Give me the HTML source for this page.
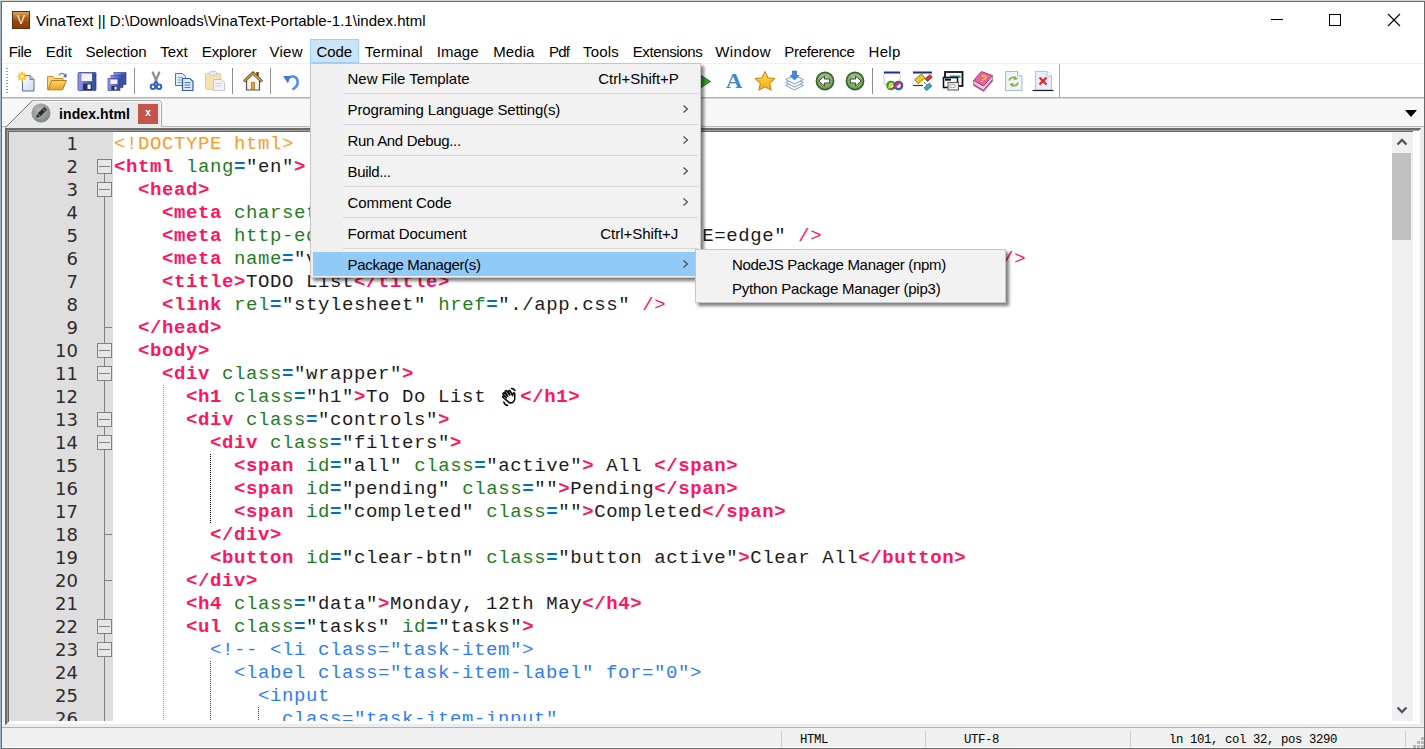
<!DOCTYPE html>
<html lang="en"><head><meta charset="utf-8"><title>VinaText</title>
<style>
*{box-sizing:border-box}
html,body{margin:0;padding:0}
body{width:1425px;height:749px;overflow:hidden;background:#fff;position:relative;font-family:"Liberation Sans",sans-serif;font-size:15px;color:#000}
.abs,#win div,#win span.mi{position:absolute}
#desk-l{left:0;top:0;width:1px;height:749px;background:#a7b3c6}
#desk-t{left:0;top:0;width:1425px;height:1px;background:#d4d7d8}
#win{position:absolute;left:1px;top:1px;width:1424px;height:748px;border:1px solid #6a6a6a;background:#fff;overflow:hidden}
/* coordinates inside #win content box are page coords minus 2 */
#inner{position:absolute;left:-2px;top:-2px;width:1425px;height:749px}
#title{left:36px;top:12px;height:18px;line-height:18px;font-size:15px;white-space:pre;letter-spacing:.04px}
#logo{left:12px;top:11px;width:18px;height:18px}
.cap{top:2px;height:36px}
#menubar{left:2px;top:39px;width:1422px;height:24px}
.mi{position:absolute;top:43px;height:18px;line-height:18px;white-space:pre}
#codehl{left:310px;top:39px;width:49px;height:24px;background:#cce4f7;border:1px solid #9bd0f9}
#menuline{left:2px;top:63px;width:1422px;height:1px;background:#f0f0f0}
#tbline{left:2px;top:97px;width:1422px;height:2px;background:linear-gradient(#b4b4b4 0 1px,#d4d4d4 1px 2px)}
#tbend{left:1059px;top:64px;width:1px;height:34px;background:#ababab}
.tsep{top:68px;width:1px;height:26px;background:#8d8d8d}
#grip{left:6px;top:68px;width:2px;height:27px;background:repeating-linear-gradient(#9a9a9a 0 1px,transparent 1px 3px)}
#tabstrip{left:2px;top:99px;width:1422px;height:27px;background:#f7f7f7}
#tabshape{left:2px;top:99px}
#tabtxt{left:59px;top:104.5px;height:18px;line-height:18px;font-weight:bold;font-size:14px;letter-spacing:.1px;white-space:pre}
#tabx{left:138px;top:104px;width:20px;height:20px;background:#c4554a;color:#fff;font-weight:bold;font-size:10px;line-height:17px;text-align:center}
#tabdd{left:1405px;top:110px;width:0;height:0;border-left:6px solid transparent;border-right:6px solid transparent;border-top:7px solid #000}
/* editor frame */
#edframe{left:5px;top:128px;width:1416px;height:597px;background:#fff;border-top:2px solid #6b6b6b;border-left:2px solid #6b6b6b;border-right:1px solid #ebebeb;border-bottom:1px solid #ebebeb}
#edframe2{left:7px;top:130px;width:1412px;height:593px;border-top:1px solid #a0a0a0;border-left:1px solid #a0a0a0}
#edframe3{left:8px;top:131px;width:1405px;height:591px;border-top:1px solid #696969;border-left:1px solid #696969}
#leftpad{left:2px;top:128px;width:3px;height:600px;background:#f3f3f3}
#rightpad{left:1421px;top:128px;width:3px;height:600px;background:#ececec}
#tabl1{left:2px;top:126px;width:1422px;height:1px;background:#b9b9b9}
#tabl2{left:2px;top:127px;width:1422px;height:1px;background:#e9e9e9}
#editor{left:9px;top:132px;width:1404px;height:589px;background:#fff;overflow:hidden}
#margin{left:0;top:0;width:104px;height:589px;background:#dedede}
.num{position:absolute;left:0;width:69px;height:23px;line-height:23px;text-align:right;font-family:"DejaVu Sans",sans-serif;font-size:18px;color:#2c2c2c}
.fline{left:95px;width:1px;background:#808080}
.fbox{left:88px;width:15px;height:15px;border:1px solid #808080;background:#e6e6e6}
.fbox i{position:absolute;left:1px;top:6px;width:11px;height:1px;background:#808080}
.ftick{left:95px;width:8px;height:1px;background:#808080}
#code{left:104px;top:0;width:1280px;height:589px}
.ln{position:absolute;left:0;height:23px;line-height:23px;white-space:pre;font-family:"Liberation Mono",monospace;font-size:19px;letter-spacing:.6px;padding-left:1px;color:#1c1c1c}
.t{color:#ff1464;font-weight:bold}
.p{color:#ff1464}
.a{color:#1e7d1e}
.e{color:#0070c0;font-weight:bold}
.s{color:#1c1c1c}
.c{color:#2f7cf6}
.d{color:#ff9a1e}
.hand{display:inline-block;vertical-align:top;width:22px;height:23px;position:relative;top:-1.5px;left:1px}
.guide{width:1px;background:repeating-linear-gradient(#9a9a9a 0 1px,transparent 1px 2px)}
.guide.k{background:repeating-linear-gradient(#000 0 1px,transparent 1px 2px)}
.guide.m{background:repeating-linear-gradient(#444 0 1px,transparent 1px 2px)}
#vsb{left:1383px;top:0;width:21px;height:589px;background:#f0f0f0}
#thumb{left:0;top:21px;width:19px;height:87px;background:#c1c1c1}
/* status bar */
#belowed{left:2px;top:725px;width:1422px;height:2px;background:#eeeeee}
#stline{left:2px;top:727px;width:1422px;height:1px;background:#b0b0b0}
#status{left:2px;top:728px;width:1422px;height:19px;background:#f0f0f0}
.ssep{top:731px;width:1px;height:17px;background:#d0d0d0}
.st{top:732px;height:16px;line-height:16px;font-family:"Liberation Mono",monospace;font-size:12.3px;letter-spacing:-.38px;white-space:pre;color:#000}
/* popup */
#popup{left:310px;top:63px;width:391px;height:215px;background:#f2f2f2;border:1px solid #c6c6c6;box-shadow:3px 3px 3px rgba(0,0,0,.5)}
#popup .gut{left:0;top:0;width:32px;height:213px;background:#f0f0f0}
#popup .pi{left:2px;width:383px;height:24px}
#popup .pi.hl{background:#91c9f7}
#popup .pt{position:absolute;left:34.6px;top:4px;height:18px;line-height:18px;white-space:pre}
#popup .sc{position:absolute;top:4px;height:18px;line-height:18px;white-space:pre}
#popup .arr{position:absolute;left:369px;top:7px}
#popup .sep{left:32px;width:355px;height:1px;background:#d7d7d7}
#sub{left:695px;top:249px;width:311px;height:54px;background:#f2f2f2;border:1px solid #c6c6c6;box-shadow:3px 3px 3px rgba(0,0,0,.5)}
#sub span{position:absolute;left:36px;height:18px;line-height:18px;white-space:pre}
.ico{position:absolute}
</style></head><body>
<div class="abs" id="desk-l"></div><div class="abs" id="desk-t"></div>
<div id="win"><div id="inner">
<svg class="ico" id="logo" viewBox="0 0 18 18"><defs><linearGradient id="lg" x1="0" y1="0" x2="0" y2="1"><stop offset="0" stop-color="#d8ad5e"/><stop offset=".35" stop-color="#b06a2a"/><stop offset=".6" stop-color="#93450c"/><stop offset="1" stop-color="#8e3f08"/></linearGradient></defs><rect x=".5" y=".5" width="17" height="17" fill="url(#lg)" stroke="#5e2c08"/><text x="9" y="13" font-family="Liberation Sans, sans-serif" font-size="12" fill="#fff3d0" text-anchor="middle">V</text></svg>
<div id="title">VinaText || D:\Downloads\VinaText-Portable-1.1\index.html</div>
<svg class="ico" style="left:1265px;top:8px" width="145" height="24" viewBox="0 0 145 24"><path d="M6 11.5h12" stroke="#000" stroke-width="1"/><rect x="64.5" y="6.5" width="11" height="11" fill="none" stroke="#000"/><path d="M123 6l12 12M135 6l-12 12" stroke="#000" stroke-width="1.1"/></svg>
<div id="codehl"></div>
<span class="mi" style="left:8.7px;letter-spacing:-0.32px">File</span>
<span class="mi" style="left:45.7px;letter-spacing:0.13px">Edit</span>
<span class="mi" style="left:85.5px;letter-spacing:-0.07px">Selection</span>
<span class="mi" style="left:160.2px;letter-spacing:-0.00px">Text</span>
<span class="mi" style="left:201.8px;letter-spacing:-0.12px">Explorer</span>
<span class="mi" style="left:269.6px;letter-spacing:0.21px">View</span>
<span class="mi" style="left:316.5px;letter-spacing:-0.11px">Code</span>
<span class="mi" style="left:364.8px;letter-spacing:0.14px">Terminal</span>
<span class="mi" style="left:436.7px;letter-spacing:0.06px">Image</span>
<span class="mi" style="left:493.3px;letter-spacing:0.05px">Media</span>
<span class="mi" style="left:549.0px;letter-spacing:-0.77px">Pdf</span>
<span class="mi" style="left:583.0px;letter-spacing:0.17px">Tools</span>
<span class="mi" style="left:632.7px;letter-spacing:-0.37px">Extensions</span>
<span class="mi" style="left:715.3px;letter-spacing:0.37px">Window</span>
<span class="mi" style="left:784.3px;letter-spacing:-0.31px">Preference</span>
<span class="mi" style="left:868.5px;letter-spacing:0.34px">Help</span>
<div id="menuline"></div>
<div id="grip"></div>
<svg width="0" height="0" style="position:absolute"><defs>
<linearGradient id="gPage" x1="0" y1="0" x2="1" y2="1"><stop offset="0" stop-color="#ffffff"/><stop offset="1" stop-color="#cfd8ee"/></linearGradient>
<linearGradient id="gFold" x1="0" y1="0" x2="0" y2="1"><stop offset="0" stop-color="#fbd674"/><stop offset="1" stop-color="#e9a21f"/></linearGradient>
<linearGradient id="gFlop" x1="0" y1="0" x2="1" y2="0"><stop offset="0" stop-color="#9a94ea"/><stop offset=".5" stop-color="#5f6fd0"/><stop offset="1" stop-color="#2f4896"/></linearGradient>
<radialGradient id="gGreen" cx=".5" cy=".4" r=".6"><stop offset="0" stop-color="#b9dd9a"/><stop offset="1" stop-color="#5f9a45"/></radialGradient>
<linearGradient id="gStar" x1="0" y1="0" x2="0" y2="1"><stop offset="0" stop-color="#ffe04a"/><stop offset="1" stop-color="#f5a81c"/></linearGradient>
</defs></svg>
<!-- 1 new -->
<svg class="ico" style="left:16px;top:71px" width="20" height="21" viewBox="0 0 20 21"><path d="M6.5 4.5H14l4 4v11.500H6.500z" fill="url(#gPage)" stroke="#5b6c9c"/><path d="M14 4.500v4h4" fill="#b9c4e2" stroke="#5b6c9c" stroke-width=".8"/><g stroke="#f7c63a" stroke-width="2" stroke-linecap="round"><path d="M6 1.500v8M2 5.500h8M3.200 2.700l5.600 5.600M8.800 2.700l-5.600 5.600"/></g><circle cx="6" cy="5.500" r="1.600" fill="#fff4b8"/></svg>
<!-- 2 open -->
<svg class="ico" style="left:46px;top:71px" width="22" height="21" viewBox="0 0 22 21"><path d="M1.500 18.500V5.500h5.500l1.500 2H17v3" fill="#f8d27a" stroke="#c98e2a"/><path d="M1.800 18.800L6 9.500h14.500L16.500 18.800z" fill="url(#gFold)" stroke="#b97a18"/><path d="M12.500 4.500c1.500-3 5.500-3 7 0.500" fill="none" stroke="#6f84a8" stroke-width="1.200"/><path d="M20.600 2.200v4h-3.600z" fill="#4f6690"/></svg>
<!-- 3 save -->
<svg class="ico" style="left:77px;top:71px" width="20" height="21" viewBox="0 0 20 21"><rect x="1" y="1.500" width="18" height="18" rx="1" fill="url(#gFlop)" stroke="#3d4a9a" stroke-width=".8"/><rect x="4.500" y="2.500" width="10.500" height="7.500" fill="#f2f3fa"/><rect x="6" y="12.500" width="9" height="6.500" fill="#2a2f55"/><rect x="10.500" y="13.500" width="3.200" height="4.500" fill="#eef0fb"/></svg>
<!-- 4 save all -->
<svg class="ico" style="left:107px;top:71px" width="20" height="21" viewBox="0 0 20 21"><rect x="7" y="1.500" width="12" height="12" fill="url(#gFlop)" stroke="#3d4a9a" stroke-width=".7"/><rect x="4" y="4.500" width="12" height="12" fill="url(#gFlop)" stroke="#3d4a9a" stroke-width=".7"/><rect x="1" y="7.500" width="12" height="12" fill="url(#gFlop)" stroke="#3d4a9a" stroke-width=".7"/><rect x="3.500" y="8.500" width="7" height="4.500" fill="#f2f3fa"/><rect x="4.500" y="15" width="6" height="4" fill="#2a2f55"/><rect x="7.500" y="15.700" width="2.200" height="2.800" fill="#eef0fb"/></svg>
<div class="tsep" style="left:134px"></div>
<!-- 5 cut -->
<svg class="ico" style="left:146px;top:71px" width="20" height="21" viewBox="0 0 20 21"><path d="M6.800 1.500L11 11.500M13.200 1.500L9 11.500" stroke="#8d929c" stroke-width="2.300" stroke-linecap="round"/><circle cx="7" cy="15.800" r="2.300" fill="none" stroke="#2f62c8" stroke-width="2"/><circle cx="13" cy="15.800" r="2.300" fill="none" stroke="#2f62c8" stroke-width="2"/><path d="M8 13l2-2 2 2" fill="none" stroke="#2f62c8" stroke-width="1.800"/></svg>
<!-- 6 copy -->
<svg class="ico" style="left:174px;top:71px" width="21" height="21" viewBox="0 0 21 21"><path d="M1.500 2.500h7l3 3v9h-10z" fill="#e9effb" stroke="#4a72c4"/><path d="M3.500 6.500h5M3.500 9h5M3.500 11.500h5" stroke="#7fa0de" stroke-width="1"/><path d="M8.500 7.500h7.500l3 3v9h-10.500z" fill="#e1e9fa" stroke="#2f5cb6" stroke-width="1.200"/><path d="M10.500 11.500h6M10.500 14h6M10.500 16.500h6" stroke="#4a78d0" stroke-width="1.200"/></svg>
<!-- 7 paste (disabled look) -->
<svg class="ico" style="left:204px;top:70px" width="22" height="22" viewBox="0 0 22 22" opacity=".8"><rect x="1.500" y="3.500" width="15" height="16" rx="1" fill="#f3dca0" stroke="#d9bf86"/><rect x="5.500" y="1.500" width="7" height="4" rx="1" fill="#dfe3e8" stroke="#b9bec6"/><path d="M9.500 9.500h8l3 3v8h-11z" fill="#eef0f4" stroke="#b4bac6"/><path d="M11.500 13.500h6M11.500 16h6" stroke="#c3c8d2"/></svg>
<div class="tsep" style="left:232px"></div>
<!-- 8 home -->
<svg class="ico" style="left:243px;top:70px" width="20" height="22" viewBox="0 0 20 22"><rect x="13.300" y="2" width="2.400" height="5" fill="#7a3b1c"/><path d="M3.500 10.500v9.500h13v-9.500" fill="#f4f4f0" stroke="#55504a" stroke-width="1.200"/><path d="M1 11.500L10 3l9 8.500" fill="none" stroke="#4a3a2a" stroke-width="3" stroke-linejoin="miter"/><path d="M1.300 11.200L10 3.200l8.700 8" fill="none" stroke="#e9a43a" stroke-width="1.500"/><rect x="8.300" y="12.500" width="3.400" height="7" fill="#e9a020" stroke="#9a6a1a" stroke-width=".6"/></svg>
<div class="tsep" style="left:270px"></div>
<!-- 9 undo -->
<svg class="ico" style="left:281px;top:71px" width="20" height="21" viewBox="0 0 20 21"><path d="M6.500 8c3-3.800 9-3.200 10 1.500c.8 4-1.200 6.800-4.200 8.300" fill="none" stroke="#4f8cf0" stroke-width="2.600" stroke-linecap="round"/><path d="M2 5l7.200 0-2.200 7.500z" fill="#3a76e4"/></svg>
<!-- play (partially hidden) -->
<svg class="ico" style="left:694px;top:71px" width="20" height="21" viewBox="0 0 20 21"><path d="M4 2.500l12.500 8-12.500 8z" fill="#3e9a3a" stroke="#2a6f28"/></svg>
<!-- A -->
<div class="ico" style="left:723px;top:69px;width:22px;height:24px;line-height:24px;text-align:center;font-family:'Liberation Serif',serif;font-weight:bold;font-size:20px;color:#3a86d8;transform:scaleX(1.15)">A</div>
<!-- star -->
<svg class="ico" style="left:754px;top:70px" width="22" height="22" viewBox="0 0 22 22"><path d="M11 1.500l2.900 6.300 6.800.8-5 4.700 1.400 6.800L11 16.700l-6.100 3.400 1.400-6.800-5-4.700 6.800-.8z" fill="url(#gStar)" stroke="#c98a1a" stroke-width="1.100" stroke-linejoin="round"/></svg>
<!-- stack -->
<svg class="ico" style="left:784px;top:70px" width="21" height="22" viewBox="0 0 21 22"><g stroke="#7d98c8" stroke-width=".9" fill="#f2f6fd"><path d="M1.500 15.500l9-4 9 4-9 4.500z"/><path d="M1.500 12.500l9-4 9 4-9 4.500z"/><path d="M1.500 9.500l9-4 9 4-9 4.500z"/></g><path d="M8.500 1h4v4.500h2.500L10.500 10 6 5.500h2.500z" fill="#3f86ea" stroke="#2a62c0" stroke-width=".6"/></svg>
<!-- back -->
<svg class="ico" style="left:815px;top:71px" width="20" height="20" viewBox="0 0 20 20"><circle cx="10" cy="10" r="8.600" fill="url(#gGreen)" stroke="#3f5f33" stroke-width="1.600"/><path d="M3.800 10l5.600-5v3h5.300v4H9.400v3z" fill="#fff" stroke="#3d3d3d" stroke-width="1"/></svg>
<!-- fwd -->
<svg class="ico" style="left:845px;top:71px" width="20" height="20" viewBox="0 0 20 20"><circle cx="10" cy="10" r="8.600" fill="url(#gGreen)" stroke="#3f5f33" stroke-width="1.600"/><path d="M16.200 10l-5.600-5v3H5.300v4h5.300v3z" fill="#fff" stroke="#3d3d3d" stroke-width="1"/></svg>
<div class="tsep" style="left:872px"></div>
<!-- win infinity -->
<svg class="ico" style="left:883px;top:70px" width="21" height="22" viewBox="0 0 21 22"><rect x="1" y="2.500" width="16" height="12" fill="#fdfdfd" stroke="#c9ccd4"/><rect x="1" y="1.500" width="16" height="2" fill="#1a2a9a"/><circle cx="8" cy="15.500" r="3.600" fill="none" stroke="#2f9a3a" stroke-width="2.400"/><circle cx="15.500" cy="15.500" r="3.600" fill="none" stroke="#2f55c8" stroke-width="2.400"/><path d="M5.500 18l4.500-5" stroke="#f0c020" stroke-width="2.200"/><path d="M10 18.500l7-7" stroke="#e03028" stroke-width="2.400"/></svg>
<!-- win tags -->
<svg class="ico" style="left:912px;top:70px" width="21" height="22" viewBox="0 0 21 22"><rect x="1" y="1.500" width="19" height="2" fill="#1a2a9a"/><path d="M1 15.500h10" stroke="#3a3a3a" stroke-width="1.200"/><g transform="rotate(-40 8 9)"><rect x="3.500" y="6" width="9" height="5.500" fill="#e9c81c" stroke="#7a6a10" stroke-width=".7"/></g><g transform="rotate(-40 17 8)"><rect x="13.500" y="6" width="6.500" height="3.600" fill="#d03a3a" stroke="#6a2020" stroke-width=".6"/></g><g transform="rotate(-40 16 17)"><rect x="12.500" y="15" width="7" height="3.800" fill="#3aa6c8" stroke="#1f5a70" stroke-width=".6"/></g><path d="M12 12l3 3" stroke="#555" stroke-width=".8"/></svg>
<!-- windows -->
<svg class="ico" style="left:942px;top:70px" width="22" height="22" viewBox="0 0 22 22"><rect x="3" y="2" width="17.500" height="14" fill="#fff" stroke="#111" stroke-width="1.800"/><rect x="8" y="5.500" width="10.500" height="2.400" fill="#2a9aa0"/><rect x="1.500" y="7.500" width="14" height="10" fill="#fff" stroke="#111" stroke-width="1.600"/><rect x="3" y="8.700" width="6" height="2" fill="#111"/><rect x="6" y="12.500" width="10.500" height="7.500" fill="#eef0f2" stroke="#555" stroke-width="1"/><rect x="8" y="14.500" width="5" height="3" fill="none" stroke="#9aa" stroke-width=".8"/></svg>
<!-- book -->
<svg class="ico" style="left:972px;top:69px" width="22" height="23" viewBox="0 0 22 23"><path d="M1.500 11.500V15.500L11.500 21.500L20.500 11V6.500L11.500 17z" fill="#f4eef3" stroke="#9a6a88" stroke-width=".8"/><path d="M1.500 13.500L11.500 19.300L20.500 8.800" fill="none" stroke="#c9b4c2" stroke-width=".8"/><path d="M1.500 11.500L9.500 2.500L20.500 6.500L11.500 17z" fill="#e9609f" stroke="#b23a78" stroke-width="1"/><path d="M1.500 15.800L11.500 21.800L20.500 11.300" fill="none" stroke="#c43f86" stroke-width="1.600"/><text x="11" y="13.500" font-family="Liberation Sans, sans-serif" font-weight="bold" font-size="11" fill="#f6d820" text-anchor="middle" transform="rotate(20 11 10)">?</text></svg>
<!-- refresh page -->
<svg class="ico" style="left:1004px;top:70px" width="20" height="22" viewBox="0 0 20 22"><path d="M1.500 1.500h12l4.500 4.500v14.500h-16.500z" fill="#eef2fb" stroke="#aab8d8"/><path d="M13.500 1.500v4.500h4.500" fill="#fff" stroke="#aab8d8"/><path d="M5.200 10.500c.5-3 4.500-4.200 6.800-2" fill="none" stroke="#8ab02a" stroke-width="1.700"/><path d="M10.500 6l3.500 3-4.200 1.300z" fill="#8ab02a"/><path d="M14 12.500c-.5 3-4.500 4.200-6.800 2" fill="none" stroke="#8ab02a" stroke-width="1.700"/><path d="M8.700 17l-3.500-3 4.200-1.300z" fill="#8ab02a"/></svg>
<!-- delete page -->
<svg class="ico" style="left:1032px;top:70px" width="22" height="22" viewBox="0 0 22 22"><path d="M3.500 1.500h11.500l4.500 4.500v14h-16z" fill="#e8eefb" stroke="#b4c2e2"/><path d="M15 1.500v4.500h4.500" fill="#fff" stroke="#b4c2e2"/><path d="M0.500 20.500h21" stroke="#222" stroke-width="1.200"/><path d="M7.500 7.500l7 7M14.500 7.500l-7 7" stroke="#e8202a" stroke-width="2.200"/></svg>

<div id="tbend"></div>
<div id="tbline"></div>
<div id="tabstrip"></div><div id="tabl1"></div><div id="tabl2"></div>
<svg class="ico" id="tabshape" width="170" height="29" viewBox="0 0 170 29"><path d="M2.500 29 L30.500 1.500 H157.500 L159.500 3.500 V29 Z" fill="#e9e9e9"/><path d="M31 2.500H157.500L158.500 3.500V27" fill="none" stroke="#f8f8f8"/><path d="M30.500 1.500 H157.500 L159.500 3.500 V27.500" fill="none" stroke="#a9a9a9"/><path d="M3.500 28.500 L30.500 1.500" fill="none" stroke="#6f6f6f" stroke-width="1"/><defs><radialGradient id="pg" cx=".4" cy=".35" r=".7"><stop offset="0" stop-color="#b5b9b7"/><stop offset="1" stop-color="#7f8482"/></radialGradient></defs><circle cx="39" cy="14" r="9.500" fill="url(#pg)"/><g transform="translate(39 14) rotate(45)"><rect x="-2" y="-6.500" width="4" height="9" fill="#2e2e2e"/><path d="M-2 3.200h4L0 6.800z" fill="#2e2e2e"/><rect x="-2" y="-4.600" width="4" height=".9" fill="#8a8e8c"/></g></svg>
<div id="tabtxt">index.html</div>
<div id="tabx">x</div>
<div id="tabdd"></div>
<div id="leftpad"></div><div id="rightpad"></div><div id="edframe"></div><div id="edframe2"></div><div id="edframe3"></div>
<div id="editor">
<div id="margin">
<div class="num" style="top:0px">1</div>
<div class="num" style="top:23px">2</div>
<div class="num" style="top:46px">3</div>
<div class="num" style="top:69px">4</div>
<div class="num" style="top:92px">5</div>
<div class="num" style="top:115px">6</div>
<div class="num" style="top:138px">7</div>
<div class="num" style="top:161px">8</div>
<div class="num" style="top:184px">9</div>
<div class="num" style="top:207px">10</div>
<div class="num" style="top:230px">11</div>
<div class="num" style="top:253px">12</div>
<div class="num" style="top:276px">13</div>
<div class="num" style="top:299px">14</div>
<div class="num" style="top:322px">15</div>
<div class="num" style="top:345px">16</div>
<div class="num" style="top:368px">17</div>
<div class="num" style="top:391px">18</div>
<div class="num" style="top:414px">19</div>
<div class="num" style="top:437px">20</div>
<div class="num" style="top:460px">21</div>
<div class="num" style="top:483px">22</div>
<div class="num" style="top:506px">23</div>
<div class="num" style="top:529px">24</div>
<div class="num" style="top:552px">25</div>
<div class="num" style="top:575px">26</div>
<div class="fline" style="top:42px;height:600px"></div>
<div class="fbox" style="top:27px"><i></i></div>
<div class="fbox" style="top:50px"><i></i></div>
<div class="fbox" style="top:211px"><i></i></div>
<div class="fbox" style="top:234px"><i></i></div>
<div class="fbox" style="top:280px"><i></i></div>
<div class="fbox" style="top:303px"><i></i></div>
<div class="fbox" style="top:487px"><i></i></div>
<div class="fbox" style="top:510px"><i></i></div>
<div class="ftick" style="top:195px"></div>
<div class="ftick" style="top:402px"></div>
<div class="ftick" style="top:448px"></div>
</div>
<div id="code">
<div class="guide" style="left:50px;top:253px;height:340px"></div>
<div class="guide k" style="left:97px;top:322px;height:69px"></div>
<div class="guide m" style="left:97px;top:529px;height:70px"></div>
<div class="guide m" style="left:145px;top:575px;height:20px"></div>
<div class="ln" style="top:1px"><span class="d">&lt;!DOCTYPE html&gt;</span></div>
<div class="ln" style="top:24px"><span class="t">&lt;html</span> <span class="a">lang</span><span class="e">=</span><span class="s">"en"</span><span class="t">&gt;</span></div>
<div class="ln" style="top:47px">  <span class="t">&lt;head&gt;</span></div>
<div class="ln" style="top:70px">    <span class="t">&lt;meta</span> <span class="a">charset</span><span class="e">=</span><span class="s">"UTF-8"</span> <span class="p">/&gt;</span></div>
<div class="ln" style="top:93px">    <span class="t">&lt;meta</span> <span class="a">http-equiv</span><span class="e">=</span><span class="s">"X-UA-Compatible"</span> <span class="a">content</span><span class="e">=</span><span class="s">"IE=edge"</span> <span class="p">/&gt;</span></div>
<div class="ln" style="top:116px">    <span class="t">&lt;meta</span> <span class="a">name</span><span class="e">=</span><span class="s">"viewport"</span> <span class="a">content</span><span class="e">=</span><span class="s">"width=device-width, initial-scale=1.0"</span> <span class="p">/&gt;</span></div>
<div class="ln" style="top:139px">    <span class="t">&lt;title&gt;</span>TODO List<span class="t">&lt;/title&gt;</span></div>
<div class="ln" style="top:162px">    <span class="t">&lt;link</span> <span class="a">rel</span><span class="e">=</span><span class="s">"stylesheet"</span> <span class="a">href</span><span class="e">=</span><span class="s">"./app.css"</span> <span class="p">/&gt;</span></div>
<div class="ln" style="top:185px">  <span class="t">&lt;/head&gt;</span></div>
<div class="ln" style="top:208px">  <span class="t">&lt;body&gt;</span></div>
<div class="ln" style="top:231px">    <span class="t">&lt;div</span> <span class="a">class</span><span class="e">=</span><span class="s">"wrapper"</span><span class="t">&gt;</span></div>
<div class="ln" style="top:254px">      <span class="t">&lt;h1</span> <span class="a">class</span><span class="e">=</span><span class="s">"h1"</span><span class="t">&gt;</span>To Do List <svg class="hand" width="22" height="23" viewBox="0 0 22 23"><title>&#x1F44B;</title><g transform="rotate(-28 11 12)" fill="none" stroke="#000" stroke-width="1.5" stroke-linecap="round" stroke-linejoin="round"><path d="M6.5 13.5 L4.6 9.2 C4.2 8 5.8 7.4 6.4 8.5 L7.6 11 L6.3 6.6 C6 5.4 7.6 4.9 8.1 6.1 L9.5 10.2 L9.1 5.4 C9.1 4.2 10.8 4.1 11 5.3 L11.7 10.2 L12.3 6.6 C12.5 5.5 14 5.7 14 6.8 L13.8 12 L15.3 10.4 C16.2 9.6 17.3 10.6 16.6 11.5 L14.4 15.6 C13.2 18.3 9.4 18.9 7.6 16.4 Z"/><path d="M3.2 13.5 C2.6 15.4 3.4 17.3 4.8 18.3 M16.2 5.2 C17.6 5.9 18.4 7.2 18.4 8.6"/></g></svg><span class="t">&lt;/h1&gt;</span></div>
<div class="ln" style="top:277px">      <span class="t">&lt;div</span> <span class="a">class</span><span class="e">=</span><span class="s">"controls"</span><span class="t">&gt;</span></div>
<div class="ln" style="top:300px">        <span class="t">&lt;div</span> <span class="a">class</span><span class="e">=</span><span class="s">"filters"</span><span class="t">&gt;</span></div>
<div class="ln" style="top:323px">          <span class="t">&lt;span</span> <span class="a">id</span><span class="e">=</span><span class="s">"all"</span> <span class="a">class</span><span class="e">=</span><span class="s">"active"</span><span class="t">&gt;</span> All <span class="t">&lt;/span&gt;</span></div>
<div class="ln" style="top:346px">          <span class="t">&lt;span</span> <span class="a">id</span><span class="e">=</span><span class="s">"pending"</span> <span class="a">class</span><span class="e">=</span><span class="s">""</span><span class="t">&gt;</span>Pending<span class="t">&lt;/span&gt;</span></div>
<div class="ln" style="top:369px">          <span class="t">&lt;span</span> <span class="a">id</span><span class="e">=</span><span class="s">"completed"</span> <span class="a">class</span><span class="e">=</span><span class="s">""</span><span class="t">&gt;</span>Completed<span class="t">&lt;/span&gt;</span></div>
<div class="ln" style="top:392px">        <span class="t">&lt;/div&gt;</span></div>
<div class="ln" style="top:415px">        <span class="t">&lt;button</span> <span class="a">id</span><span class="e">=</span><span class="s">"clear-btn"</span> <span class="a">class</span><span class="e">=</span><span class="s">"button active"</span><span class="t">&gt;</span>Clear All<span class="t">&lt;/button&gt;</span></div>
<div class="ln" style="top:438px">      <span class="t">&lt;/div&gt;</span></div>
<div class="ln" style="top:461px">      <span class="t">&lt;h4</span> <span class="a">class</span><span class="e">=</span><span class="s">"data"</span><span class="t">&gt;</span>Monday, 12th May<span class="t">&lt;/h4&gt;</span></div>
<div class="ln" style="top:484px">      <span class="t">&lt;ul</span> <span class="a">class</span><span class="e">=</span><span class="s">"tasks"</span> <span class="a">id</span><span class="e">=</span><span class="s">"tasks"</span><span class="t">&gt;</span></div>
<div class="ln" style="top:507px">        <span class="c">&lt;!-- &lt;li class="task-item"&gt;</span></div>
<div class="ln" style="top:530px">          <span class="c">&lt;label class="task-item-label" for="0"&gt;</span></div>
<div class="ln" style="top:553px">            <span class="c">&lt;input</span></div>
<div class="ln" style="top:576px">              <span class="c">class="task-item-input"</span></div>
</div>
<div id="vsb"><div id="thumb"></div>
<svg class="ico" style="left:4px;top:6px" width="12" height="8" viewBox="0 0 12 8"><path d="M1.500 6.500L6 2L10.500 6.500" fill="none" stroke="#505560" stroke-width="2.4"/></svg>
<svg class="ico" style="left:4px;top:574px" width="12" height="8" viewBox="0 0 12 8"><path d="M1.500 1.500L6 6L10.500 1.500" fill="none" stroke="#505560" stroke-width="2.4"/></svg>
</div>
</div>
<div id="belowed"></div><div id="stline"></div><div id="status"></div>
<div class="ssep" style="left:781px"></div><div class="ssep" style="left:925px"></div><div class="ssep" style="left:1130px"></div><div class="ssep" style="left:1405px"></div>
<div class="st" style="left:800px">HTML</div><div class="st" style="left:964px">UTF-8</div><div class="st" style="left:1169px">ln 101, col 32, pos 3290</div>
<svg class="ico" style="left:1412px;top:736px" width="13" height="13" viewBox="0 0 13 13"><g fill="#b8b8b8"><rect x="9" y="1" width="3" height="3"/><rect x="5" y="5" width="3" height="3"/><rect x="9" y="5" width="3" height="3"/><rect x="1" y="9" width="3" height="3"/><rect x="5" y="9" width="3" height="3"/><rect x="9" y="9" width="3" height="3"/></g></svg>
<div id="cover6" style="left:703px;top:247px;width:310px;height:4px;background:#fff"></div>
<div id="popup">
<div class="gut"></div>
<div class="pi" style="top:2px"><span class="pt" style="letter-spacing:-0.07px">New File Template</span><span class="sc" style="left:285.2px;letter-spacing:-0.02px">Ctrl+Shift+P</span></div>
<div class="sep" style="top:29px"></div>
<div class="pi" style="top:33px"><span class="pt" style="letter-spacing:-0.14px">Programing Language Setting(s)</span><svg class="arr" width="8" height="10" viewBox="0 0 8 10"><path d="M1.5 1.5 L5.5 5 L1.5 8.5" fill="none" stroke="#444" stroke-width="1.1"/></svg></div>
<div class="sep" style="top:60px"></div>
<div class="pi" style="top:64px"><span class="pt" style="letter-spacing:-0.33px">Run And Debug...</span><svg class="arr" width="8" height="10" viewBox="0 0 8 10"><path d="M1.5 1.5 L5.5 5 L1.5 8.5" fill="none" stroke="#444" stroke-width="1.1"/></svg></div>
<div class="sep" style="top:91px"></div>
<div class="pi" style="top:95px"><span class="pt" style="letter-spacing:-0.36px">Build...</span><svg class="arr" width="8" height="10" viewBox="0 0 8 10"><path d="M1.5 1.5 L5.5 5 L1.5 8.5" fill="none" stroke="#444" stroke-width="1.1"/></svg></div>
<div class="sep" style="top:122px"></div>
<div class="pi" style="top:126px"><span class="pt" style="letter-spacing:-0.09px">Comment Code</span><svg class="arr" width="8" height="10" viewBox="0 0 8 10"><path d="M1.5 1.5 L5.5 5 L1.5 8.5" fill="none" stroke="#444" stroke-width="1.1"/></svg></div>
<div class="sep" style="top:153px"></div>
<div class="pi" style="top:157px"><span class="pt" style="letter-spacing:-0.07px">Format Document</span><span class="sc" style="left:287.3px;letter-spacing:-0.03px">Ctrl+Shift+J</span></div>
<div class="sep" style="top:184px"></div>
<div class="pi hl" style="top:188px"><span class="pt" style="letter-spacing:-0.35px">Package Manager(s)</span><svg class="arr" width="8" height="10" viewBox="0 0 8 10"><path d="M1.5 1.5 L5.5 5 L1.5 8.5" fill="none" stroke="#444" stroke-width="1.1"/></svg></div>
</div>
<div id="sub"><span style="top:6px;letter-spacing:-0.31px">NodeJS Package Manager (npm)</span><span style="top:30px;letter-spacing:-0.23px">Python Package Manager (pip3)</span></div>
</div></div>
</body></html>
